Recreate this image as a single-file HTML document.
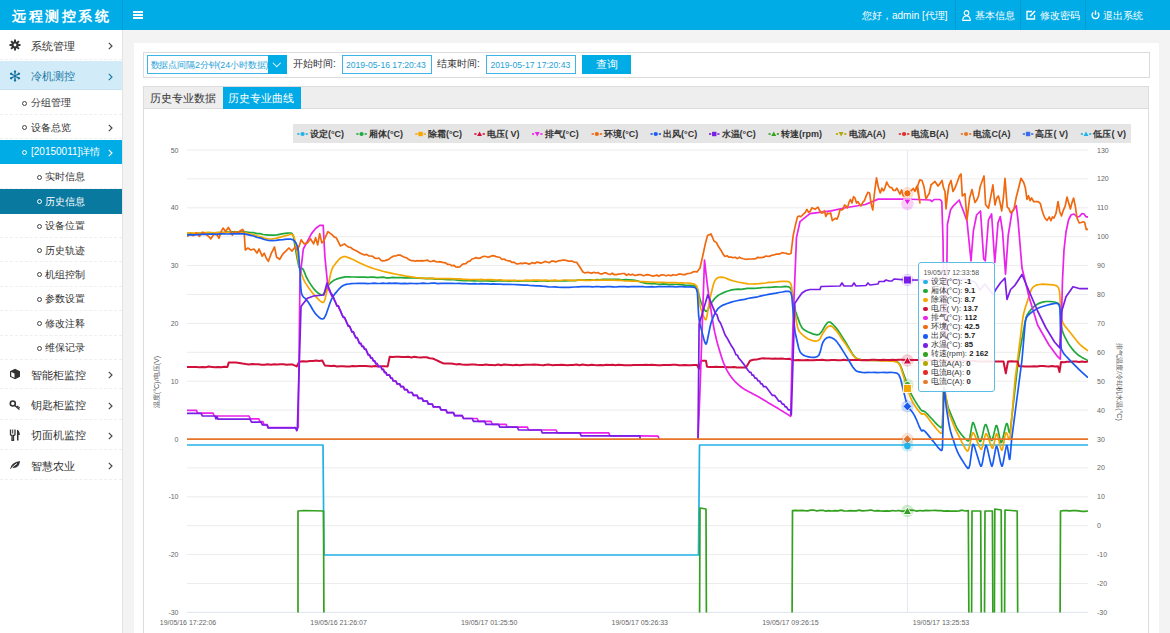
<!DOCTYPE html>
<html><head><meta charset="utf-8">
<style>
*{margin:0;padding:0;box-sizing:border-box}
html,body{width:1170px;height:633px;overflow:hidden;background:#f3f3f3;font-family:"Liberation Sans",sans-serif;color:#333}
.abs{position:absolute}
#hdr{position:absolute;left:0;top:0;width:1170px;height:30.4px;background:#00ace6;z-index:2}
#logo{position:absolute;left:0;top:0;width:123px;height:30px;border-right:1px solid #0799cf;color:#fff;font-weight:bold;font-size:13.5px;line-height:33.5px;padding-left:12px;letter-spacing:2.5px}
#burger{position:absolute;left:133px;top:11px;width:10px;height:8px;border-top:2px solid #fff;border-bottom:2px solid #fff}
#burger:after{content:"";position:absolute;left:0;top:1px;width:10px;height:2px;background:#fff}
.hr{position:absolute;top:0.5px;height:30px;line-height:30px;color:#fff;font-size:10px;white-space:nowrap}
.sep{position:absolute;top:0;width:1px;height:30px;background:#0799cf}
#side{position:absolute;left:0;top:30px;width:123px;height:603px;background:#fff;border-right:1px solid #e3e3e3}
.it{position:absolute;left:0;width:122px;border-bottom:1px dashed #efefef;color:#333;white-space:nowrap}
.it.t{height:30.3px;font-size:11px;line-height:30px}
.it.s{height:24.4px;font-size:10px;line-height:24px}
.it .tx{position:absolute;left:31px;top:0.5px}
.it.ss .tx{left:45px}
.it .chev{position:absolute;left:107.6px;top:12px;width:5px;height:8px}
.it.s .chev{top:9.2px}
.it .dot{position:absolute;left:22px;top:10px;width:5px;height:5px;border:1.4px solid #444;border-radius:50%}
.it.ss .dot{left:37px}
.ic{position:absolute;left:9px;top:9px;width:12px;height:12px}
#main{position:absolute;left:133.5px;top:43px;width:1025px;height:600px;background:#fff}
#form{position:absolute;left:143px;top:52px;width:1007px;height:25.5px;border:1px solid #dcdcdc;background:#fff}
.inp{position:absolute;top:55px;height:18.5px;border:1px solid #3cb4e6;color:#1e9fd8;font-size:8.6px;line-height:18px;padding-left:3.5px;background:#fff;white-space:nowrap}
.lbl{position:absolute;top:55px;height:18px;line-height:18px;font-size:10px;color:#333;white-space:nowrap}
#selbtn{position:absolute;left:268px;top:55px;width:19px;height:18.5px;background:#00ace6}
#selbtn:after{content:"";position:absolute;left:6px;top:5px;width:4.5px;height:4.5px;border-right:1.4px solid #fff;border-bottom:1.4px solid #fff;transform:rotate(45deg)}
#qbtn{position:absolute;left:582px;top:55px;width:49px;height:18.5px;background:#00ace6;color:#fff;font-size:10.5px;line-height:18.5px;text-align:center}
#tabs{position:absolute;left:143px;top:86px;width:1006px;height:560px;border:1px solid #dcdcdc;background:#fff}
#tabbar{position:absolute;left:0;top:0;width:1004px;height:22px;background:#eeeeee;border-bottom:1px solid #dcdcdc}
.tab{position:absolute;top:0;height:22px;line-height:22px;font-size:11px;white-space:nowrap}
#legend{position:absolute;left:292.7px;top:124.3px;width:838.7px;height:18.7px;background:#e5e5e5}
svg{position:absolute;left:0;top:0}
.tip{position:absolute;left:917.5px;top:261.5px;width:77.5px;height:130.5px;border:1px solid #5bbde6;border-radius:3px;background:rgba(255,255,255,0.9);padding:5px 0 0 5px;font-size:7.7px;color:#333}
.tip .tt{height:10px;line-height:10px;margin-bottom:-0.8px;color:#555;white-space:nowrap;font-size:6.9px}
.tip .tr{height:9.1px;line-height:9.1px;white-space:nowrap;position:relative;padding-left:7px}
.tip .tr i{position:absolute;left:-0.5px;top:2.8px;width:4.5px;height:4.5px;border-radius:50%}
.tip b{color:#222}
.ytl{position:absolute;font-size:7.5px;color:#555;white-space:nowrap}
</style></head><body>
<div id="hdr">
  <div id="logo">远程测控系统</div>
  <div id="burger"></div>
  <div class="hr" style="left:862px">您好，admin [代理]</div>
  <div class="sep" style="left:955px"></div>
  <svg class="abs" style="left:962px;top:10px" width="9" height="11" viewBox="0 0 9 11"><circle cx="4.5" cy="3" r="2.3" fill="none" stroke="#fff" stroke-width="1.2"/><path d="M0.8,10.3 Q0.8,6 4.5,6 Q8.2,6 8.2,10.3 Z" fill="none" stroke="#fff" stroke-width="1.2"/></svg>
  <div class="hr" style="left:974.5px">基本信息</div>
  <div class="sep" style="left:1019.5px"></div>
  <svg class="abs" style="left:1026px;top:10px" width="10" height="10" viewBox="0 0 10 10"><path d="M6,1.5 H1 V9 H8.5 V5" fill="none" stroke="#fff" stroke-width="1.3"/><path d="M4,6.2 L9,1" stroke="#fff" stroke-width="1.6"/></svg>
  <div class="hr" style="left:1039.5px">修改密码</div>
  <div class="sep" style="left:1084.5px"></div>
  <svg class="abs" style="left:1091px;top:10px" width="9" height="10" viewBox="0 0 9 10"><path d="M2.3,2.5 A3.4,3.4 0 1 0 6.7,2.5" fill="none" stroke="#fff" stroke-width="1.4"/><line x1="4.5" y1="0.5" x2="4.5" y2="5" stroke="#fff" stroke-width="1.4"/></svg>
  <div class="hr" style="left:1103px">退出系统</div>
</div>

<div id="side">
  <div class="it t" style="top:0">
    <svg class="ic" viewBox="0 0 12 12"><g fill="#333"><circle cx="6" cy="6" r="3.6"/><rect x="5" y="0.5" width="2" height="11"/><rect x="0.5" y="5" width="11" height="2"/><rect x="5" y="0.5" width="2" height="11" transform="rotate(45 6 6)"/><rect x="5" y="0.5" width="2" height="11" transform="rotate(-45 6 6)"/></g><circle cx="6" cy="6" r="1.4" fill="#fff"/></svg>
    <span class="tx">系统管理</span><svg class="chev" viewBox="0 0 5 8"><path d="M0.8,0.8 L4,4 L0.8,7.2" fill="none" stroke="#444" stroke-width="1.15"/></svg></div>
  <div class="it t" style="top:30.6px;height:29.9px;background:#d1ecf8;color:#1a78a6;border-bottom:1px solid #c5e3f0">
    <svg class="ic" style="left:9.3px;top:9.5px" viewBox="0 0 12 12"><g fill="#15729e"><circle cx="6" cy="6" r="1.6"/><g transform="rotate(0 6 6)"><rect x="5.3" y="1.2" width="1.4" height="3.2"/><path d="M6,0 L7.4,1.6 L6,3 L4.6,1.6 Z"/></g><g transform="rotate(60 6 6)"><rect x="5.3" y="1.2" width="1.4" height="3.2"/><path d="M6,0 L7.4,1.6 L6,3 L4.6,1.6 Z"/></g><g transform="rotate(120 6 6)"><rect x="5.3" y="1.2" width="1.4" height="3.2"/><path d="M6,0 L7.4,1.6 L6,3 L4.6,1.6 Z"/></g><g transform="rotate(180 6 6)"><rect x="5.3" y="1.2" width="1.4" height="3.2"/><path d="M6,0 L7.4,1.6 L6,3 L4.6,1.6 Z"/></g><g transform="rotate(240 6 6)"><rect x="5.3" y="1.2" width="1.4" height="3.2"/><path d="M6,0 L7.4,1.6 L6,3 L4.6,1.6 Z"/></g><g transform="rotate(300 6 6)"><rect x="5.3" y="1.2" width="1.4" height="3.2"/><path d="M6,0 L7.4,1.6 L6,3 L4.6,1.6 Z"/></g></g></svg>
    <span class="tx">冷机测控</span><svg class="chev" viewBox="0 0 5 8"><path d="M0.8,0.8 L4,4 L0.8,7.2" fill="none" stroke="#1a78a6" stroke-width="1.15"/></svg></div>
  <div class="it s" style="top:60.6px"><i class="dot"></i><span class="tx">分组管理</span></div>
  <div class="it s" style="top:85px"><i class="dot"></i><span class="tx">设备总览</span><svg class="chev" viewBox="0 0 5 8"><path d="M0.8,0.8 L4,4 L0.8,7.2" fill="none" stroke="#444" stroke-width="1.15"/></svg></div>
  <div class="it s" style="top:109.8px;height:24.6px;background:#00ace6;color:#fff;border-bottom-color:#00aae6"><i class="dot" style="border-color:#fff"></i><span class="tx">[20150011]详情</span><svg class="chev" viewBox="0 0 5 8"><path d="M0.8,0.8 L4,4 L0.8,7.2" fill="none" stroke="#fff" stroke-width="1.15"/></svg></div>
  <div class="it s ss" style="top:134.8px"><i class="dot"></i><span class="tx">实时信息</span></div>
  <div class="it s ss" style="top:159.2px;background:#0a799f;color:#fff;border-bottom-color:#0a799f"><i class="dot" style="border-color:#fff"></i><span class="tx">历史信息</span></div>
  <div class="it s ss" style="top:183.6px"><i class="dot"></i><span class="tx">设备位置</span></div>
  <div class="it s ss" style="top:208px"><i class="dot"></i><span class="tx">历史轨迹</span></div>
  <div class="it s ss" style="top:232.4px"><i class="dot"></i><span class="tx">机组控制</span></div>
  <div class="it s ss" style="top:256.8px"><i class="dot"></i><span class="tx">参数设置</span></div>
  <div class="it s ss" style="top:281.2px"><i class="dot"></i><span class="tx">修改注释</span></div>
  <div class="it s ss" style="top:305.6px"><i class="dot"></i><span class="tx">维保记录</span></div>
  <div class="it t" style="top:329px">
    <svg class="ic" viewBox="0 0 12 12"><path d="M6,0.8 L11,3.2 V8.8 L6,11.2 L1,8.8 V3.2 Z" fill="#333"/><path d="M2.2,4 L5.5,5.6 V9.8 L2.2,8.2 Z" fill="#fff"/></svg>
    <span class="tx">智能柜监控</span><svg class="chev" viewBox="0 0 5 8"><path d="M0.8,0.8 L4,4 L0.8,7.2" fill="none" stroke="#444" stroke-width="1.15"/></svg></div>
  <div class="it t" style="top:359.5px">
    <svg class="ic" viewBox="0 0 12 12"><circle cx="3.8" cy="4.5" r="2.5" fill="none" stroke="#333" stroke-width="1.6"/><path d="M5.5,6.2 L10.5,10.5 M8,8.3 L9.3,7 M9.3,9.5 L10.6,8.2" stroke="#333" stroke-width="1.5"/></svg>
    <span class="tx">钥匙柜监控</span><svg class="chev" viewBox="0 0 5 8"><path d="M0.8,0.8 L4,4 L0.8,7.2" fill="none" stroke="#444" stroke-width="1.15"/></svg></div>
  <div class="it t" style="top:389.8px">
    <svg class="ic" viewBox="0 0 12 12"><path d="M1.5,0.5 V5 Q1.5,6.5 3,6.5 V11.5 H4.5 V6.5 Q6,6.5 6,5 V0.5" fill="none" stroke="#333" stroke-width="1.3"/><path d="M3.7,0.5 V4.5" stroke="#333" stroke-width="1"/><path d="M8,11.5 V0.8 Q10.8,1.5 10.8,6 H9.5 V11.5 Z" fill="#333"/></svg>
    <span class="tx">切面机监控</span><svg class="chev" viewBox="0 0 5 8"><path d="M0.8,0.8 L4,4 L0.8,7.2" fill="none" stroke="#444" stroke-width="1.15"/></svg></div>
  <div class="it t" style="top:420.1px">
    <svg class="ic" viewBox="0 0 12 12"><path d="M1,10.5 Q2,3 11,2 Q10.5,9.5 3.5,9 Z" fill="#333"/><path d="M1,11 Q5,6 8,4.5" fill="none" stroke="#fff" stroke-width="1"/></svg>
    <span class="tx">智慧农业</span><svg class="chev" viewBox="0 0 5 8"><path d="M0.8,0.8 L4,4 L0.8,7.2" fill="none" stroke="#444" stroke-width="1.15"/></svg></div>
</div>

<div id="main"></div>
<div id="form"></div>
<div class="inp" style="left:146.5px;width:122px;font-size:8.9px;padding-left:3px;letter-spacing:-0.12px;overflow:hidden">数据点间隔2分钟(24小时数据)</div>
<div id="selbtn"></div>
<div class="lbl" style="left:293px">开始时间:</div>
<div class="inp" style="left:341.5px;width:90px">2019-05-16 17:20:43</div>
<div class="lbl" style="left:437px">结束时间:</div>
<div class="inp" style="left:486px;width:90px">2019-05-17 17:20:43</div>
<div id="qbtn">查询</div>

<div id="tabs">
  <div id="tabbar">
    <div class="tab" style="left:6px;color:#333">历史专业数据</div>
    <div class="tab" style="left:79px;width:78px;background:#00aae6;color:#fff;padding-left:5px">历史专业曲线</div>
  </div>
</div>
<div id="legend"></div>

<svg width="1170" height="633" style="font-family:'Liberation Sans',sans-serif">
<g font-size="7" fill="#666"><text x="178.5" y="152.5" text-anchor="end">50</text>
<text x="178.5" y="210.3" text-anchor="end">40</text>
<text x="178.5" y="268.1" text-anchor="end">30</text>
<text x="178.5" y="325.9" text-anchor="end">20</text>
<text x="178.5" y="383.7" text-anchor="end">10</text>
<text x="178.5" y="441.5" text-anchor="end">0</text>
<text x="178.5" y="499.3" text-anchor="end">-10</text>
<text x="178.5" y="557.1" text-anchor="end">-20</text>
<text x="178.5" y="614.9" text-anchor="end">-30</text>
<text x="1097" y="152.5" text-anchor="start">130</text>
<text x="1097" y="181.4" text-anchor="start">120</text>
<text x="1097" y="210.3" text-anchor="start">110</text>
<text x="1097" y="239.2" text-anchor="start">100</text>
<text x="1097" y="268.1" text-anchor="start">90</text>
<text x="1097" y="297.0" text-anchor="start">80</text>
<text x="1097" y="325.9" text-anchor="start">70</text>
<text x="1097" y="354.8" text-anchor="start">60</text>
<text x="1097" y="383.7" text-anchor="start">50</text>
<text x="1097" y="412.6" text-anchor="start">40</text>
<text x="1097" y="441.5" text-anchor="start">30</text>
<text x="1097" y="470.4" text-anchor="start">20</text>
<text x="1097" y="499.3" text-anchor="start">10</text>
<text x="1097" y="528.2" text-anchor="start">0</text>
<text x="1097" y="557.1" text-anchor="start">-10</text>
<text x="1097" y="586.0" text-anchor="start">-20</text>
<text x="1097" y="614.9" text-anchor="start">-30</text>
<text x="188.0" y="625" text-anchor="middle">19/05/16 17:22:06</text>
<text x="338.6" y="625" text-anchor="middle">19/05/16 21:26:07</text>
<text x="489.2" y="625" text-anchor="middle">19/05/17 01:25:50</text>
<text x="639.8" y="625" text-anchor="middle">19/05/17 05:26:33</text>
<text x="790.4" y="625" text-anchor="middle">19/05/17 09:26:15</text>
<text x="941.0" y="625" text-anchor="middle">19/05/17 13:25:53</text></g>
<line x1="187" y1="150.0" x2="1088" y2="150.0" stroke="#ececec" stroke-width="1"/>
<line x1="187" y1="178.9" x2="1088" y2="178.9" stroke="#ececec" stroke-width="1"/>
<line x1="187" y1="207.8" x2="1088" y2="207.8" stroke="#ececec" stroke-width="1"/>
<line x1="187" y1="236.7" x2="1088" y2="236.7" stroke="#ececec" stroke-width="1"/>
<line x1="187" y1="265.6" x2="1088" y2="265.6" stroke="#ececec" stroke-width="1"/>
<line x1="187" y1="294.5" x2="1088" y2="294.5" stroke="#ececec" stroke-width="1"/>
<line x1="187" y1="323.4" x2="1088" y2="323.4" stroke="#ececec" stroke-width="1"/>
<line x1="187" y1="352.3" x2="1088" y2="352.3" stroke="#ececec" stroke-width="1"/>
<line x1="187" y1="381.2" x2="1088" y2="381.2" stroke="#ececec" stroke-width="1"/>
<line x1="187" y1="410.1" x2="1088" y2="410.1" stroke="#ececec" stroke-width="1"/>
<line x1="187" y1="439.0" x2="1088" y2="439.0" stroke="#ececec" stroke-width="1"/>
<line x1="187" y1="467.9" x2="1088" y2="467.9" stroke="#ececec" stroke-width="1"/>
<line x1="187" y1="496.8" x2="1088" y2="496.8" stroke="#ececec" stroke-width="1"/>
<line x1="187" y1="525.7" x2="1088" y2="525.7" stroke="#ececec" stroke-width="1"/>
<line x1="187" y1="554.6" x2="1088" y2="554.6" stroke="#ececec" stroke-width="1"/>
<line x1="187" y1="583.5" x2="1088" y2="583.5" stroke="#ececec" stroke-width="1"/>
<line x1="187" y1="612.4" x2="1088" y2="612.4" stroke="#dfe4ee" stroke-width="1"/>
<line x1="907.4" y1="150" x2="907.4" y2="612" stroke="#e3e8f2" stroke-width="1"/>
<defs><clipPath id="cp"><rect x="187" y="140" width="901" height="472.6"/></clipPath></defs><g clip-path="url(#cp)">
<polyline fill="none" stroke="#20b2e6" stroke-width="1.7" stroke-linejoin="round" points="187.0,445.0 323.0,445.0 324.0,555.0 698.5,555.0 699.5,445.0 1088.0,445.0"/>
<polyline fill="none" stroke="#1fa83c" stroke-width="1.7" stroke-linejoin="round" points="187.0,233.6 190.1,233.5 193.1,233.5 196.2,233.4 199.2,233.0 202.3,232.8 205.4,232.9 208.4,232.7 211.5,232.9 214.5,232.8 217.6,232.6 220.6,232.5 223.7,232.4 226.8,232.0 229.8,232.1 232.9,231.8 235.9,232.2 239.0,231.8 243.5,231.8 246.5,232.0 250.9,232.5 254.0,232.7 257.0,233.6 260.0,233.6 263.0,234.5 266.1,234.8 270.5,235.2 273.5,235.2 277.2,234.8 281.8,233.9 285.2,233.4 287.4,233.1 289.2,233.0 290.8,233.0 292.0,233.6 292.9,234.9 293.6,236.7 293.9,239.2 294.3,241.8 294.8,244.5 295.5,248.8 296.6,255.4 297.4,259.6 297.9,262.1 298.4,264.4 298.9,266.5 299.5,267.9 300.2,268.7 300.9,268.8 301.6,268.3 302.4,268.5 303.3,269.6 304.1,271.4 305.1,273.9 306.1,276.5 307.4,279.0 309.0,281.9 311.0,284.9 312.8,287.5 314.3,289.4 315.9,291.1 317.4,292.5 318.8,293.6 320.1,294.3 321.2,294.8 322.3,294.9 323.3,294.3 324.3,293.1 325.4,291.2 326.4,288.8 327.6,286.6 328.9,284.6 330.2,283.1 331.8,281.8 333.5,280.6 335.6,279.5 337.9,278.6 340.5,277.9 343.0,277.3 345.3,276.9 347.4,276.8 349.5,276.9 351.7,277.0 354.2,277.0 358.5,277.1 361.6,277.0 364.7,277.1 367.8,277.4 370.9,277.0 373.9,277.1 377.0,277.6 380.1,277.4 383.2,277.2 386.3,277.8 389.4,277.8 392.5,277.4 395.6,277.6 398.6,277.5 401.7,277.7 404.8,277.9 407.9,277.7 411.0,277.9 415.5,278.0 418.5,278.1 423.0,278.3 426.1,278.6 429.3,278.4 432.4,278.6 435.5,279.1 438.7,279.0 441.8,279.2 444.9,279.5 448.1,279.6 451.2,279.7 454.3,279.6 457.5,280.2 460.6,280.5 463.7,280.7 466.9,280.6 470.0,280.7 474.5,280.9 477.5,281.0 482.0,281.0 485.0,280.9 488.0,280.9 491.0,281.1 494.0,281.1 497.0,280.8 500.0,280.8 503.0,280.9 506.0,281.0 509.0,281.2 512.0,281.0 515.0,280.7 518.0,281.2 521.0,281.0 524.0,281.0 527.0,280.8 530.0,281.0 533.0,280.9 536.0,281.2 539.0,280.8 542.0,281.0 545.0,280.8 548.0,281.1 551.0,280.7 554.0,281.0 558.5,281.0 561.5,280.9 566.0,280.8 569.1,280.6 572.2,280.5 575.2,280.6 578.3,280.1 581.4,280.2 584.5,280.0 587.5,279.9 590.6,279.9 593.7,280.1 596.8,279.7 599.8,279.9 602.9,279.3 606.0,279.4 610.5,279.3 613.5,279.3 618.0,279.4 621.7,279.8 625.3,279.6 629.0,279.8 633.4,280.1 636.1,280.6 638.7,281.3 641.1,282.1 643.7,282.8 646.4,283.3 650.8,283.6 653.9,283.6 657.0,284.0 660.1,284.3 663.2,283.8 666.3,284.1 669.4,284.6 672.4,284.4 675.5,284.5 678.6,284.5 681.7,284.6 684.8,285.1 687.9,285.4 691.0,285.3 694.9,286.1 696.7,287.7 698.1,290.6 698.9,294.9 699.8,298.5 700.7,301.3 702.1,304.8 703.9,309.0 705.4,311.1 706.6,311.1 707.9,309.8 709.1,307.1 710.5,304.5 712.0,302.1 713.6,299.9 715.4,297.8 717.4,296.0 719.7,294.4 722.9,292.9 727.1,291.3 730.6,290.2 733.5,289.6 738.0,289.1 741.1,289.3 744.3,288.8 747.4,288.3 750.5,288.3 753.7,288.4 756.8,288.2 759.9,287.9 763.1,287.5 766.2,287.5 769.3,287.3 772.5,287.2 775.6,286.8 778.7,287.0 781.9,286.8 785.0,286.4 788.9,286.9 790.6,288.3 792.0,291.9 794.0,304.1 794.9,308.5 795.6,311.4 797.0,315.6 800.0,323.9 801.9,327.7 803.8,329.6 807.6,331.8 813.4,334.1 817.3,334.9 819.4,334.2 822.0,331.2 825.0,326.0 827.2,322.9 828.6,322.0 829.9,322.0 831.1,322.8 832.5,324.0 834.0,325.5 835.6,327.4 837.4,329.6 839.1,332.0 840.7,334.4 843.1,338.1 846.4,343.4 849.6,349.0 852.9,354.6 855.6,357.8 857.9,359.1 862.0,359.9 865.1,360.2 868.2,359.9 871.3,360.4 874.4,360.3 877.5,360.5 880.6,360.6 883.7,360.4 886.8,360.5 889.9,360.6 893.0,360.8 897.0,361.6 899.0,363.1 901.0,366.7 905.3,378.9 906.8,383.2 907.9,386.0 909.0,388.8 910.3,391.8 911.5,394.6 912.9,397.2 915.2,401.1 918.3,406.1 920.5,409.3 921.6,410.5 922.6,411.1 923.3,410.9 924.4,411.4 925.8,412.5 928.5,415.2 931.8,418.8 935.0,422.3 938.3,425.6 940.9,427.6 941.9,427.2 942.5,424.0 943.4,392.0 943.6,389.0 943.9,389.0 944.7,391.9 946.8,401.5 947.8,405.9 948.7,408.7 950.3,412.9 955.3,424.5 957.2,428.5 958.8,431.0 961.4,434.5 965.2,438.9 967.7,440.9 968.9,440.6 969.9,437.5 971.9,425.6 972.7,422.6 973.3,422.6 974.5,425.4 978.6,438.7 979.8,441.5 980.6,441.5 981.7,438.6 984.2,427.4 985.3,424.5 986.0,424.5 987.2,427.4 990.1,437.6 991.3,440.5 992.0,440.5 993.0,437.6 995.2,428.4 996.1,425.5 996.8,425.5 997.7,428.5 1000.0,439.4 1000.9,442.4 1001.6,442.4 1002.6,439.5 1005.5,426.5 1006.5,423.6 1007.1,423.6 1007.9,425.9 1008.7,430.6 1009.4,432.8 1009.8,432.8 1010.4,429.8 1014.0,397.7 1017.6,366.0 1018.2,361.5 1018.6,358.5 1019.3,354.1 1025.2,321.1 1026.3,316.8 1027.6,314.2 1029.4,311.6 1031.7,308.8 1034.0,306.6 1036.2,305.0 1038.5,303.6 1041.0,302.6 1043.6,301.9 1046.3,301.5 1050.0,301.5 1054.5,302.0 1057.6,303.0 1059.2,304.7 1060.2,308.5 1061.4,324.8 1062.0,329.2 1062.8,332.1 1064.2,335.7 1066.5,340.1 1068.4,343.6 1070.0,346.0 1072.0,348.6 1074.3,351.4 1076.6,353.6 1078.9,355.5 1082.0,357.4 1088.0,360.6"/>
<polyline fill="none" stroke="#f5a700" stroke-width="1.7" stroke-linejoin="round" points="187.0,233.0 190.1,232.8 193.1,233.1 196.2,233.0 199.2,233.1 202.3,232.7 205.4,232.7 208.4,232.6 211.5,232.6 214.5,232.9 217.6,232.5 220.6,232.7 223.7,232.5 226.8,232.5 229.8,232.6 232.9,232.8 235.9,232.6 239.0,232.6 243.5,232.7 246.4,233.1 250.8,234.2 254.1,234.9 257.5,236.0 260.9,236.9 264.2,238.1 268.6,239.0 271.5,239.0 275.7,238.4 281.3,236.9 285.2,235.9 287.3,235.3 289.1,234.8 290.5,234.3 291.7,234.3 292.7,234.9 293.5,235.9 294.1,237.5 294.7,239.4 295.2,241.6 295.9,245.7 298.1,259.6 298.9,264.0 299.5,266.9 300.5,270.5 301.8,274.8 303.1,278.3 304.3,280.9 306.2,284.1 308.6,287.7 310.8,290.7 312.6,293.0 315.6,296.3 319.7,300.6 322.4,302.5 323.8,302.2 325.1,299.0 326.7,291.9 327.7,287.5 328.3,284.5 329.3,280.1 330.7,273.4 332.0,269.1 333.3,266.5 335.6,263.4 338.7,259.7 341.3,257.5 343.3,256.7 345.4,256.6 347.4,257.3 349.6,258.1 351.8,259.0 354.1,260.1 356.4,261.2 358.8,262.4 361.0,263.5 363.3,264.5 365.4,265.5 367.8,266.5 370.3,267.4 374.2,268.7 379.5,270.3 383.6,271.5 386.5,272.2 390.9,273.1 394.3,273.9 397.8,274.5 401.2,275.1 404.6,275.8 408.1,276.3 411.5,276.8 415.9,277.5 418.9,277.8 423.4,278.1 426.5,278.4 429.5,278.4 432.6,278.2 435.6,278.6 438.7,278.5 441.7,278.7 444.8,278.7 447.9,278.7 450.9,278.7 454.0,278.8 457.0,278.8 460.1,278.8 463.1,279.3 466.2,279.4 469.3,279.6 472.3,279.5 475.4,279.5 478.4,279.7 481.5,279.4 484.5,279.8 487.6,279.7 490.7,279.7 493.7,279.8 496.8,280.0 499.8,279.9 502.9,280.2 505.9,280.3 509.0,280.3 513.5,280.4 516.5,280.5 521.0,280.5 524.0,280.4 527.1,280.2 530.1,280.4 533.1,280.2 536.2,280.2 539.2,280.2 542.2,280.3 545.3,280.1 548.3,280.4 551.4,280.6 554.4,280.2 557.4,280.4 560.5,280.5 563.5,280.0 566.5,280.0 569.6,280.4 572.6,280.4 575.6,280.3 578.7,280.0 581.7,280.1 584.8,280.4 587.8,280.4 590.8,280.3 593.9,279.9 596.9,280.3 599.9,280.0 603.0,280.2 606.0,280.0 610.5,280.1 613.5,280.1 618.0,280.3 621.5,280.3 624.9,281.0 628.4,281.0 631.9,281.2 635.3,281.1 638.8,281.5 643.3,281.7 646.3,281.8 650.8,282.0 653.9,282.2 657.0,282.3 660.1,282.4 663.2,282.3 666.3,282.7 669.4,282.6 672.4,282.6 675.5,282.7 678.6,283.1 681.7,282.8 684.8,283.0 687.9,283.0 691.0,283.4 694.8,284.3 696.5,285.8 697.8,289.6 699.2,300.9 700.0,305.4 700.7,308.3 702.0,312.2 704.0,317.2 705.3,319.7 706.1,319.6 706.9,316.6 708.6,305.9 709.3,301.5 709.9,298.6 711.0,294.2 713.3,284.8 714.7,281.0 715.9,279.2 717.4,278.0 719.1,277.3 721.1,277.1 723.2,277.3 725.6,278.0 728.1,279.1 730.8,280.1 733.6,281.0 737.9,282.0 743.7,283.1 748.1,283.8 751.1,284.0 755.6,283.8 758.9,283.6 762.1,283.3 765.4,283.0 768.7,282.4 771.9,282.4 775.2,282.0 778.5,281.6 781.7,281.3 785.0,281.3 788.8,281.7 790.5,283.1 791.6,286.8 792.4,294.0 792.9,298.5 793.3,301.5 794.0,305.9 797.0,325.1 798.2,329.3 799.6,331.7 801.8,334.2 804.9,336.8 807.6,338.7 810.1,339.8 812.6,340.6 815.1,341.1 817.3,340.8 819.0,340.0 820.4,338.4 821.2,336.3 822.4,334.1 823.7,331.9 825.2,329.7 826.9,327.6 828.6,326.3 830.3,325.9 831.9,326.4 833.6,327.9 835.2,329.6 836.9,331.5 839.4,335.0 842.7,340.2 846.0,344.6 849.3,349.7 852.6,354.7 855.5,357.9 857.8,359.2 862.0,360.0 865.1,359.9 868.2,360.3 871.3,360.1 874.4,360.5 877.5,360.5 880.6,360.9 883.7,360.6 886.8,360.9 889.9,361.1 893.0,361.2 897.0,362.1 898.9,363.6 900.8,367.2 905.5,382.7 906.9,387.0 907.8,389.8 909.0,393.1 910.3,397.0 911.7,400.2 913.1,402.8 915.2,406.2 918.3,410.5 920.4,413.0 921.6,414.0 922.6,414.2 923.3,413.8 924.3,414.0 925.6,414.9 927.4,417.1 929.9,420.4 932.0,423.3 933.9,425.6 936.2,428.5 939.1,431.8 941.0,433.3 942.0,433.0 942.5,429.8 943.3,392.5 943.5,389.0 943.7,387.9 944.0,387.8 944.4,388.7 944.8,390.1 945.2,392.0 945.8,395.9 947.2,405.3 948.0,409.7 948.7,412.5 950.3,416.8 953.4,424.4 955.2,428.6 956.4,431.3 958.5,435.3 961.9,442.2 965.2,448.5 967.1,451.1 968.1,450.9 969.2,447.9 971.6,435.9 972.6,432.9 973.5,432.8 975.0,435.6 979.1,446.4 980.7,449.2 981.5,449.1 982.6,446.1 984.7,436.9 985.7,433.9 986.6,433.9 987.9,436.7 990.8,445.3 992.1,448.1 992.9,448.1 993.8,445.1 995.4,436.9 996.3,433.9 996.9,433.9 998.0,436.8 1000.5,447.2 1001.6,450.1 1002.2,450.1 1003.0,447.1 1005.0,435.9 1005.8,432.9 1006.5,432.9 1007.4,434.6 1008.3,437.9 1009.1,439.6 1009.7,439.5 1010.2,436.5 1014.5,386.0 1014.9,381.5 1015.2,378.5 1015.8,374.0 1019.2,346.9 1022.6,319.7 1023.3,315.2 1024.0,312.3 1025.2,308.0 1030.2,292.4 1031.8,288.7 1033.4,286.9 1035.2,285.6 1037.3,284.9 1039.7,284.5 1042.2,284.2 1046.5,284.4 1049.8,284.6 1053.0,284.8 1056.8,285.9 1058.4,287.5 1059.5,291.3 1061.3,316.3 1062.1,320.6 1063.1,323.1 1064.5,325.5 1066.2,327.6 1068.0,329.8 1069.8,332.0 1072.6,335.5 1076.3,340.3 1079.1,343.6 1081.0,345.5 1083.5,347.5 1088.0,350.7"/>
<polyline fill="none" stroke="#d0103a" stroke-width="2.0" stroke-linejoin="round" points="187.0,366.9 190.1,367.0 193.2,367.1 196.3,367.1 199.4,367.2 202.5,367.1 205.6,367.2 208.8,366.6 211.9,366.9 215.0,367.3 218.1,367.1 221.2,367.3 224.3,366.7 227.4,367.0 228.7,362.6 232.3,362.6 236.0,362.6 239.2,362.9 242.5,363.5 245.8,364.0 249.0,364.4 252.1,364.1 255.3,364.2 258.4,364.3 261.5,364.7 264.6,364.7 267.8,364.2 270.9,364.7 274.0,364.3 277.2,364.6 280.3,364.3 283.4,364.2 286.5,364.8 289.7,364.4 292.8,364.6 296.7,366.4 299.2,361.8 302.8,361.3 306.4,361.6 310.0,361.0 313.1,361.1 316.1,360.6 319.2,360.9 322.3,360.5 324.9,365.6 327.9,365.7 330.9,366.0 334.0,365.8 337.0,366.4 340.0,366.2 343.2,366.3 346.4,366.6 349.5,366.5 352.7,366.1 355.9,366.2 359.1,366.0 362.3,366.0 365.4,366.0 368.6,366.2 371.8,366.4 375.0,366.0 378.2,366.5 381.3,366.3 384.5,366.3 387.7,366.4 389.7,356.7 392.8,357.0 395.9,356.8 398.9,356.7 402.0,356.9 405.1,357.1 408.2,356.7 411.3,357.4 414.4,356.7 417.4,357.3 420.5,357.4 423.6,357.2 426.6,357.3 429.6,358.3 432.6,358.5 436.4,360.1 440.2,362.0 444.0,363.6 447.0,363.4 450.0,363.5 453.0,363.7 456.0,364.4 459.0,363.9 462.0,364.4 465.0,364.7 468.0,364.8 471.0,364.5 474.0,364.6 477.0,364.8 480.0,364.9 483.0,365.1 486.0,364.6 489.0,365.1 492.1,365.1 495.1,365.2 498.1,364.6 501.1,365.2 504.1,364.6 507.1,364.8 510.1,365.0 513.2,365.2 516.2,364.8 519.2,365.2 522.2,365.0 525.2,364.8 528.2,364.8 531.2,364.7 534.2,364.6 537.3,364.7 540.3,365.1 543.3,365.3 546.3,364.7 549.3,364.6 552.3,365.3 555.3,365.0 558.4,364.9 561.4,364.8 564.4,365.0 567.4,365.2 570.4,364.9 573.4,364.9 576.4,364.6 579.5,365.2 582.5,364.6 585.5,364.9 588.5,365.2 591.5,364.7 594.5,365.1 597.5,365.3 600.6,365.0 603.6,365.2 606.6,364.7 609.6,364.9 612.6,364.7 615.6,365.2 618.6,364.8 621.7,364.9 624.7,365.3 627.7,365.2 630.7,365.3 633.7,364.9 636.7,365.0 639.7,365.1 642.8,365.0 645.8,364.8 648.8,364.9 651.8,364.7 654.8,364.9 657.8,365.3 660.8,365.3 663.8,365.1 666.9,365.0 669.9,364.9 672.9,364.7 675.9,364.8 678.9,365.2 681.9,365.3 684.9,364.9 688.0,365.2 691.0,365.2 694.0,365.1 697.0,365.0 699.0,368.8 701.0,360.8 706.0,360.8 707.0,366.7 710.0,366.9 713.0,367.0 716.0,366.8 719.0,367.1 722.0,366.9 725.0,367.1 728.0,367.3 731.0,367.3 734.0,367.1 737.0,367.6 740.0,367.5 743.0,367.5 746.0,367.5 750.0,360.8 753.2,359.8 756.5,359.6 759.8,358.8 763.0,358.3 766.0,358.5 769.0,358.4 772.0,358.7 775.0,358.6 778.0,358.8 781.0,358.5 784.0,358.8 787.0,358.9 790.0,358.8 792.0,360.0 795.1,360.2 798.1,359.9 801.2,360.2 804.2,360.3 807.3,360.1 810.3,360.3 813.4,360.3 816.4,360.0 819.5,360.0 822.5,359.8 825.6,360.2 828.6,360.3 831.7,360.0 834.8,360.1 837.8,360.2 840.9,360.2 843.9,359.8 847.0,360.2 850.0,360.1 853.1,360.1 856.1,359.9 859.2,360.1 862.2,360.2 865.3,360.1 868.4,360.2 871.4,359.7 874.5,359.8 877.5,360.0 880.6,360.1 883.6,359.8 886.7,360.1 889.7,360.1 892.8,359.7 895.8,360.0 898.9,359.8 901.9,359.7 905.0,360.0 908.0,359.8 911.0,360.0 914.0,359.9 917.0,360.0 920.0,359.9 923.0,360.3 926.0,360.3 929.0,360.5 932.0,360.5 935.0,360.3 938.0,360.8 941.0,360.3 944.0,360.6 947.0,360.5 950.0,360.7 953.0,360.5 956.0,361.1 959.0,360.8 962.0,360.6 965.0,361.1 968.0,360.8 971.0,361.1 974.0,361.0 977.0,361.3 980.0,361.6 983.0,361.5 986.0,361.3 989.0,361.6 992.0,361.5 995.0,361.5 999.2,361.4 1003.5,361.5 1005.8,373.4 1008.0,361.5 1011.2,361.2 1014.3,361.6 1017.5,361.5 1019.0,366.3 1022.0,366.3 1025.0,366.6 1028.0,366.6 1031.0,366.4 1034.0,366.2 1037.0,366.6 1040.0,366.0 1043.0,366.0 1046.0,366.3 1049.0,366.4 1052.0,366.0 1055.0,366.4 1058.0,366.3 1059.5,372.0 1061.0,362.0 1064.0,362.2 1067.0,361.8 1070.0,361.8 1073.0,361.6 1076.0,361.6 1079.0,362.0 1082.0,361.5 1085.0,361.9 1088.0,361.5"/>
<polyline fill="none" stroke="#ea22ea" stroke-width="1.7" stroke-linejoin="round" points="187.0,410.4 196.5,410.4 197.5,413.2 213.0,413.2 214.2,416.0 249.0,416.0 250.3,418.9 258.8,418.9 260.0,421.7 263.0,421.7 264.0,424.6 267.2,424.6 268.3,427.6 295.6,427.6 296.8,430.5 298.2,427.0 300.0,277.8 303.3,249.0 311.5,233.6 315.6,228.5 319.7,225.4 323.2,225.4 324.9,257.0 328.0,288.0 332.0,296.0 332.0,294.4 333.3,297.2 334.5,300.1 335.8,303.0 337.0,305.9 338.3,305.9 339.5,308.8 340.8,311.7 342.0,314.6 343.3,317.4 344.5,317.4 345.8,320.3 347.0,323.2 348.3,326.1 349.5,326.1 350.8,329.0 352.0,331.9 353.3,331.9 354.5,334.8 355.8,337.7 357.0,337.7 358.3,340.5 359.5,343.4 360.8,343.4 362.0,346.3 363.3,346.3 364.6,349.2 365.8,349.2 367.1,352.1 368.3,355.0 369.6,355.0 370.8,357.9 372.1,357.9 373.3,360.8 374.6,360.8 375.8,363.6 377.1,363.6 378.3,366.5 379.6,366.5 380.8,366.5 382.1,369.4 383.3,369.4 384.6,372.3 385.8,372.3 387.1,375.2 388.3,375.2 389.6,375.2 390.8,378.1 392.1,378.1 393.3,381.0 394.6,381.0 395.9,381.0 397.1,383.8 398.4,383.8 399.6,383.8 400.9,386.7 402.1,386.7 403.4,386.7 404.6,389.6 405.9,389.6 407.1,389.6 408.4,392.5 409.6,392.5 410.9,392.5 412.1,392.5 413.4,395.4 414.6,395.4 415.9,395.4 417.1,395.4 418.4,398.3 419.6,398.3 420.9,398.3 422.1,398.3 423.4,401.2 424.7,401.2 425.9,401.2 427.2,401.2 428.4,404.1 429.7,404.1 430.9,404.1 432.2,404.1 433.4,406.9 434.7,406.9 435.9,406.9 437.2,406.9 438.4,406.9 439.7,406.9 440.9,409.8 442.2,409.8 443.4,409.8 444.7,409.8 445.9,409.8 447.2,412.7 448.4,412.7 449.7,412.7 450.9,412.7 452.2,412.7 453.4,412.7 454.7,415.6 456.0,415.6 457.2,415.6 458.5,415.6 459.7,415.6 461.0,415.6 462.2,415.6 463.5,418.5 464.7,418.5 466.0,418.5 467.2,418.5 468.5,418.5 469.7,418.5 471.0,418.5 472.2,418.5 473.5,418.5 474.7,418.5 476.0,418.5 477.2,418.5 478.5,421.4 479.7,421.4 481.0,421.4 482.2,421.4 483.5,421.4 484.7,421.4 486.0,421.4 487.3,421.4 488.5,421.4 489.8,421.4 491.0,421.4 492.3,424.3 493.5,424.3 494.8,424.3 496.0,424.3 497.3,424.3 498.5,424.3 499.8,424.3 501.0,424.3 502.3,424.3 503.5,424.3 504.8,424.3 506.0,424.3 507.3,427.2 508.5,427.2 509.8,427.2 511.0,427.2 512.3,427.2 513.5,427.2 514.8,427.2 516.0,427.2 517.3,427.2 518.6,427.2 519.8,427.2 521.1,427.2 522.3,427.2 523.6,427.2 524.8,427.2 526.1,427.2 527.3,427.2 528.6,430.0 529.8,430.0 531.1,430.0 532.3,430.0 533.6,430.0 534.8,430.0 536.1,430.0 537.3,430.0 538.6,430.0 539.8,430.0 541.1,430.0 542.3,430.0 543.6,430.0 544.8,430.0 546.1,430.0 547.3,430.0 548.6,430.0 549.9,430.0 551.1,430.0 552.4,430.0 553.6,430.0 554.9,430.0 556.1,430.0 557.4,432.9 558.6,432.9 559.9,432.9 561.1,432.9 562.4,432.9 563.6,432.9 564.9,432.9 566.1,432.9 567.4,432.9 568.6,432.9 569.9,432.9 571.1,432.9 572.4,432.9 573.6,432.9 574.9,432.9 576.1,432.9 577.4,432.9 578.7,432.9 579.9,432.9 581.2,432.9 582.4,432.9 583.7,432.9 584.9,432.9 586.2,432.9 587.4,432.9 588.7,432.9 589.9,432.9 591.2,432.9 592.4,432.9 593.7,432.9 594.9,432.9 596.2,432.9 597.4,432.9 598.7,432.9 599.9,432.9 601.2,432.9 602.4,432.9 603.7,432.9 604.9,432.9 606.2,432.9 607.4,432.9 608.7,432.9 610.0,435.8 611.2,435.8 612.5,435.8 613.7,435.8 615.0,435.8 616.2,435.8 617.5,435.8 618.7,435.8 620.0,435.8 621.2,435.8 622.5,435.8 623.7,435.8 625.0,435.8 626.2,435.8 627.5,435.8 628.7,435.8 630.0,435.8 631.2,435.8 632.5,435.8 633.7,435.8 635.0,435.8 636.2,435.8 637.5,435.8 638.7,435.8 640.0,435.8 658.0,436.2 659.0,438.5 659.0,439.0"/>
<polyline fill="none" stroke="#ea22ea" stroke-width="1.7" stroke-linejoin="round" points="698.0,440.0 700.0,390.0 704.5,260.0 705.9,272.7 706.7,279.2 707.2,283.7 707.7,287.7 708.2,291.2 708.8,295.5 709.6,300.7 710.6,307.7 712.0,316.5 713.1,323.4 714.0,328.6 714.9,332.9 715.7,336.3 716.6,340.2 717.8,344.6 719.2,349.4 720.8,354.8 722.3,359.5 723.8,363.5 725.3,366.9 726.6,369.7 728.1,372.3 729.6,374.8 731.3,377.1 733.0,379.2 734.8,381.3 736.7,383.2 738.6,384.9 740.5,386.5 742.5,388.0 744.6,389.4 746.7,390.6 748.9,391.7 751.0,392.8 753.1,393.9 755.1,394.9 757.0,396.0 758.9,397.1 760.8,398.2 762.6,399.2 764.3,400.3 766.1,401.3 767.8,402.4 769.5,403.4 771.3,404.5 773.0,405.5 774.7,406.6 776.5,407.6 778.2,408.6 779.8,409.6 781.3,410.5 782.7,411.3 784.0,412.1 785.2,412.9 786.4,413.6 787.9,414.6 790.6,416.4 793.0,324.3 796.5,237.4 800.0,221.7 809.9,213.6 831.2,210.9 844.0,208.0 865.4,204.5 878.2,199.1 905.0,199.0 930.0,200.0 932.0,201.5 934.0,199.5 940.0,199.5 941.8,201.5 943.0,240.0 944.5,350.0 946.0,330.0 947.4,224.5 950.5,210.0 952.9,206.3 959.2,200.0 961.0,205.0 963.0,210.0 967.0,221.0 971.0,260.8 973.4,230.8 976.6,215.0 980.5,211.0 983.7,259.0 985.3,260.8 988.5,219.8 991.6,214.0 994.8,262.4 998.0,222.9 1000.3,216.6 1002.6,232.0 1005.5,274.3 1008.2,235.5 1012.0,211.9 1016.3,205.7 1018.0,220.0 1022.0,268.0 1029.0,296.7 1037.6,325.0 1049.0,345.0 1057.5,356.4 1060.3,359.2 1061.2,330.0 1062.5,280.0 1064.0,250.0 1066.0,232.0 1068.5,220.0 1071.0,215.0 1074.0,214.0 1077.0,216.8 1079.5,216.5 1082.0,213.5 1084.0,214.0 1086.0,216.8 1088.0,216.8"/>
<polyline fill="none" stroke="#f0690f" stroke-width="1.7" stroke-linejoin="round" points="187.2,236.7 190.3,234.2 193.4,235.7 196.4,233.0 199.5,236.3 202.6,232.2 205.7,234.2 208.8,236.7 210.8,238.8 213.9,234.2 217.0,234.6 219.0,238.3 221.1,231.6 223.1,228.1 225.6,231.6 228.3,227.5 230.3,230.5 232.4,235.1 234.4,231.6 237.5,233.0 240.6,230.5 242.7,229.5 244.1,231.6 245.3,250.0 247.8,248.0 250.9,250.0 254.0,249.0 257.0,253.1 259.1,249.0 262.2,256.2 264.2,253.1 266.3,258.3 268.4,261.3 271.4,253.1 274.5,247.0 276.6,257.2 279.7,259.3 282.7,254.2 285.8,251.1 288.9,248.0 292.0,251.1 295.1,247.0 297.1,250.0 299.2,245.9 301.2,239.8 304.3,243.9 307.4,242.9 310.5,238.8 313.6,243.9 315.6,237.7 317.7,244.9 319.7,233.6 321.8,242.9 323.8,240.8 325.9,236.1 327.9,231.6 329.9,233.2 332.0,234.6 334.1,236.9 336.2,237.7 338.2,241.7 340.3,245.9 342.4,244.9 344.4,243.9 346.4,245.6 348.5,247.0 350.6,247.4 352.6,249.0 354.6,250.1 356.7,251.1 360.0,253.1 362.2,254.0 364.4,255.0 366.5,254.4 368.7,255.8 370.7,256.0 372.8,256.3 374.8,258.2 376.9,258.5 378.9,258.0 380.9,260.3 383.0,260.8 385.0,260.6 387.2,259.9 389.3,258.9 391.5,257.2 393.7,256.0 395.8,256.0 398.0,255.0 400.2,255.1 402.3,256.3 404.5,257.3 406.7,257.9 408.8,259.6 411.0,260.6 413.1,260.5 415.1,261.2 417.2,260.6 419.3,260.9 421.3,260.6 423.4,260.9 425.4,260.5 427.5,260.2 429.6,261.5 431.6,261.5 433.7,260.6 435.7,261.7 437.7,262.0 439.7,261.7 441.7,262.1 443.7,262.7 445.7,262.8 447.7,264.5 449.7,264.4 451.7,265.7 453.7,265.3 455.7,266.8 457.7,267.1 459.7,267.0 461.8,264.8 463.8,263.8 465.9,263.7 467.9,261.6 469.9,261.2 472.0,259.0 474.0,258.5 476.0,257.6 478.0,258.3 480.0,258.2 482.0,257.0 484.0,256.3 486.0,256.5 488.0,257.3 490.0,256.6 492.0,255.8 494.0,255.7 496.0,256.6 498.0,257.0 500.0,257.5 502.0,259.5 504.0,259.0 506.0,260.3 508.0,260.8 510.0,260.9 512.0,262.5 514.0,262.1 516.0,263.6 518.0,264.0 520.1,263.2 522.1,263.6 524.2,263.1 526.3,263.0 528.4,264.1 530.4,263.7 532.5,262.6 534.6,263.5 536.6,262.2 538.7,262.4 540.8,263.1 542.9,262.5 544.9,261.4 547.0,262.0 549.2,262.7 551.4,261.2 553.6,261.1 555.8,261.9 558.0,260.9 560.2,260.7 562.4,260.1 564.6,260.0 566.8,260.6 569.2,261.2 571.7,261.0 574.1,262.1 576.6,262.3 578.7,265.3 580.9,268.7 583.0,272.0 585.2,273.0 587.3,272.3 589.5,272.6 591.7,273.3 593.8,272.3 596.0,273.0 598.0,272.5 600.1,273.9 602.1,273.9 604.1,272.9 606.2,272.9 608.2,274.0 610.2,274.5 612.3,273.2 614.3,274.7 616.3,274.6 618.4,274.2 620.4,274.0 622.4,273.5 624.5,273.5 626.5,275.3 628.5,274.1 630.6,275.0 632.6,274.3 634.6,275.4 636.7,275.1 638.7,274.6 640.7,274.5 642.8,275.6 644.8,275.3 646.8,274.6 648.8,274.9 650.8,275.5 652.8,276.1 654.8,275.7 656.8,275.1 658.8,276.3 660.8,275.1 662.8,274.8 664.8,275.3 666.8,275.6 668.8,275.0 670.8,275.8 672.8,274.9 674.8,275.0 676.8,275.1 678.9,274.0 680.9,274.1 682.9,274.7 684.9,274.6 686.9,273.7 688.9,273.5 691.0,273.0 693.0,271.9 695.0,271.5 697.0,272.0 700.0,268.0 703.0,254.8 705.2,244.3 707.5,235.6 711.0,233.9 714.0,241.0 716.5,242.6 718.6,246.8 720.8,249.9 722.9,253.9 725.0,256.5 727.0,255.8 729.1,257.2 731.1,257.1 733.2,257.7 735.2,257.2 737.3,258.6 739.4,257.2 741.4,258.2 743.5,258.8 745.5,259.3 747.6,259.2 749.6,259.0 751.6,259.0 753.6,258.8 755.7,258.7 757.7,257.3 759.7,257.6 761.7,257.6 763.8,257.2 765.8,256.0 767.8,256.3 769.8,256.1 771.9,255.2 773.9,255.0 775.9,254.2 777.9,254.2 780.0,253.9 782.0,252.6 784.0,253.0 786.3,253.4 788.7,254.2 791.0,253.5 793.2,235.4 796.0,222.6 797.5,216.9 799.0,216.0 800.5,216.7 802.0,215.6 803.5,214.0 805.2,212.6 806.9,209.4 808.6,212.3 810.3,211.2 812.0,207.7 813.5,208.5 815.1,209.3 816.6,208.1 818.1,207.2 819.6,210.6 821.2,212.9 822.7,213.0 824.3,210.6 825.9,216.4 827.5,213.1 829.1,213.7 830.7,213.0 832.3,220.6 833.9,219.4 835.5,218.3 837.0,219.2 838.5,215.6 840.0,209.7 841.5,210.0 843.0,209.5 844.5,205.0 846.0,206.0 847.5,207.9 849.0,202.4 850.5,199.5 852.0,203.0 853.5,196.6 855.0,198.0 856.5,203.1 858.0,201.7 859.5,204.4 861.0,206.0 862.7,202.3 864.4,200.7 866.2,195.9 867.9,192.3 869.6,193.0 871.2,204.1 872.8,210.0 874.6,192.0 876.5,177.8 878.4,187.4 880.3,193.0 881.9,188.2 883.5,190.9 885.1,187.6 886.7,182.0 888.4,185.5 890.1,187.3 891.8,187.7 893.5,190.5 895.2,190.5 896.8,188.2 898.4,191.2 900.0,194.1 901.6,190.0 903.2,195.6 904.8,195.8 906.4,192.7 908.0,193.8 909.7,191.3 911.4,190.5 913.2,188.5 914.9,191.4 916.6,186.4 918.3,193.9 920.0,203.0 917.6,186.0 919.8,179.8 922.0,180.5 924.0,186.8 926.0,199.0 927.7,195.9 929.3,193.2 931.0,185.0 933.0,183.2 935.0,181.5 936.5,183.7 938.0,186.0 940.0,183.6 942.0,180.5 943.5,187.8 945.0,191.5 946.0,209.0 947.5,195.0 949.0,185.0 951.0,180.5 953.0,191.5 955.0,187.9 957.0,182.7 959.5,175.7 961.0,174.0 962.3,196.0 965.0,193.7 967.0,220.0 969.6,198.0 972.0,189.5 973.5,196.4 975.0,202.5 976.8,200.1 978.5,196.0 980.2,186.5 982.0,181.5 984.0,176.0 985.6,204.8 988.5,208.1 991.3,193.8 992.9,184.9 995.0,205.0 996.7,198.1 998.4,196.0 1000.0,202.4 1001.7,210.9 1003.4,197.7 1005.0,178.3 1007.2,207.0 1008.9,208.7 1010.6,212.6 1012.3,211.5 1014.0,209.0 1016.1,197.8 1018.3,189.3 1021.0,178.3 1023.8,182.7 1025.4,188.1 1027.0,199.3 1028.5,195.7 1030.1,200.7 1031.6,198.0 1033.8,201.7 1036.0,201.5 1038.2,201.7 1040.4,203.7 1041.9,209.8 1043.4,214.5 1044.9,218.0 1047.1,220.4 1049.3,217.0 1050.9,220.6 1052.4,217.0 1054.0,218.0 1056.0,213.3 1058.0,201.5 1059.8,212.0 1061.5,215.9 1063.3,210.3 1065.2,206.1 1067.0,197.0 1068.7,202.9 1070.4,209.0 1072.0,202.6 1073.6,198.0 1075.3,206.2 1077.0,218.0 1079.2,223.0 1081.4,222.5 1083.1,221.7 1084.7,222.6 1086.3,229.6 1088.0,229.0"/>
<polyline fill="none" stroke="#1a5cf2" stroke-width="1.7" stroke-linejoin="round" points="187.0,235.0 190.6,234.7 194.3,234.8 197.9,234.7 201.5,234.4 206.0,234.3 209.0,234.2 213.5,234.1 216.7,234.3 219.9,233.9 223.1,233.8 226.2,234.0 229.4,233.9 232.6,233.7 235.8,233.8 239.0,233.7 243.5,233.9 246.4,234.3 250.7,235.3 254.1,236.3 257.5,237.5 260.9,238.2 264.3,239.5 268.6,240.5 271.5,240.7 276.0,240.4 279.5,239.8 283.1,239.7 286.6,239.1 290.7,239.1 292.9,239.8 294.6,241.2 296.0,243.1 297.0,245.3 297.8,247.8 298.5,252.0 299.5,265.6 299.9,270.1 300.1,273.1 300.3,277.6 300.9,289.2 301.5,293.3 302.3,295.4 303.5,297.1 305.1,298.4 306.6,300.1 308.1,302.0 310.2,305.3 312.8,309.8 315.0,313.1 316.8,315.2 318.7,317.0 320.7,318.6 322.5,319.0 324.0,318.4 325.8,315.2 330.0,303.0 331.7,298.9 333.2,296.3 335.5,293.1 338.8,289.2 341.5,286.6 343.7,285.3 346.1,284.4 348.7,284.0 351.3,283.7 354.1,283.5 358.5,283.4 361.6,283.3 364.6,283.3 367.7,283.6 370.7,283.5 373.8,283.2 376.8,283.4 379.9,283.5 382.9,283.2 386.0,283.5 389.0,283.2 392.1,283.3 395.1,283.2 398.2,283.3 401.2,283.6 404.3,283.4 407.4,283.6 410.4,283.4 413.5,283.5 416.5,283.6 419.6,283.5 422.6,283.2 425.7,283.4 428.7,283.5 431.8,283.2 434.8,283.2 437.9,283.6 440.9,283.4 444.0,283.4 448.5,283.4 451.5,283.4 456.0,283.5 459.1,283.4 462.2,283.6 465.4,283.5 468.5,283.9 471.6,283.8 474.7,283.6 477.8,284.0 480.9,283.7 484.1,283.9 487.2,283.8 490.3,284.2 493.4,283.9 496.5,284.2 499.6,284.0 502.8,284.3 505.9,284.4 509.0,284.4 513.5,284.5 516.5,284.6 521.0,284.9 524.0,285.1 527.1,285.2 530.1,285.5 533.2,285.6 536.2,285.9 539.3,285.8 542.4,286.2 545.4,286.3 548.5,286.8 551.5,287.0 554.6,286.8 557.6,287.2 562.1,287.4 565.1,287.4 569.2,287.3 574.4,287.0 578.5,286.8 581.5,286.7 586.0,286.7 589.0,286.5 592.0,286.8 595.0,286.7 598.0,286.5 601.0,286.8 604.0,286.9 607.0,286.7 610.0,286.6 613.0,286.8 616.0,287.0 619.0,286.6 622.0,286.6 625.0,286.6 628.0,286.8 631.0,286.7 634.0,286.6 637.0,286.7 640.0,286.5 643.0,286.7 646.0,287.0 649.0,286.8 652.0,286.7 655.0,287.0 658.0,286.7 661.0,286.6 664.0,286.5 667.0,286.6 670.0,286.6 673.0,286.6 676.0,287.0 679.0,286.7 682.0,286.7 685.0,286.8 688.0,287.0 691.0,286.8 694.8,287.5 696.4,289.0 697.4,292.8 698.6,314.8 699.1,319.3 699.5,322.2 700.6,326.6 704.4,341.1 705.6,344.0 706.3,344.0 707.2,341.0 710.1,326.7 711.2,322.3 712.2,319.5 713.7,316.0 715.9,311.7 718.0,308.6 720.1,306.8 723.1,305.1 727.2,303.5 730.6,302.4 733.5,301.5 737.9,300.5 741.2,299.8 744.5,299.3 747.8,298.5 751.2,297.9 754.5,297.3 757.8,296.8 761.1,295.9 765.5,295.0 768.5,294.4 772.9,293.6 776.0,293.2 779.1,292.5 782.3,292.0 785.4,291.3 789.2,291.4 790.8,292.6 791.8,296.2 794.3,325.0 794.8,329.5 795.2,332.4 796.1,336.8 798.7,348.0 800.0,351.8 801.5,353.7 803.3,355.1 805.4,356.0 807.7,356.6 810.1,357.1 812.6,357.3 815.1,357.3 817.2,356.6 818.9,355.1 820.2,351.9 821.4,347.1 822.4,343.6 823.4,341.4 824.6,339.7 826.0,338.4 827.4,337.6 828.9,337.2 830.5,337.4 832.2,338.0 833.8,338.9 835.3,340.1 836.8,341.6 838.0,343.4 839.4,345.3 840.8,347.5 843.1,351.1 846.4,356.4 849.6,361.8 852.9,367.2 855.6,370.4 857.9,371.7 862.0,372.3 865.1,372.6 868.2,372.4 871.3,372.5 874.4,372.3 877.5,372.6 880.6,372.5 883.7,372.3 886.8,372.7 889.9,372.4 893.0,372.5 896.9,373.2 898.8,374.7 900.4,378.3 905.9,400.6 907.2,404.7 908.4,407.1 909.8,409.2 911.5,411.0 913.0,413.1 914.4,415.4 916.3,419.3 919.2,426.5 920.8,429.7 921.6,430.8 922.2,430.9 922.7,430.2 923.5,430.3 924.7,431.1 927.2,433.9 931.0,438.6 934.8,443.3 938.6,448.2 941.0,450.4 942.0,450.1 942.5,446.9 943.9,390.6 944.0,387.6 944.2,387.6 944.6,390.6 945.6,401.4 946.1,405.9 946.5,408.9 947.2,413.3 949.0,424.1 949.9,428.5 950.6,431.4 951.9,435.7 955.7,447.2 957.3,451.4 958.6,454.1 960.8,458.0 965.8,465.9 967.9,468.4 968.9,468.1 969.8,465.1 972.2,447.4 972.9,444.4 973.5,444.4 974.7,447.2 979.6,463.3 980.8,466.1 981.5,466.1 982.3,463.1 985.0,448.4 985.8,445.4 986.4,445.4 987.3,448.4 990.7,463.1 991.6,466.1 992.2,466.1 993.0,463.1 995.5,449.3 996.3,446.3 996.8,446.3 997.8,449.3 1000.7,463.1 1001.7,466.1 1002.3,466.1 1003.1,463.1 1005.8,448.4 1006.6,445.5 1007.1,445.5 1007.7,448.4 1008.9,456.5 1009.4,459.4 1009.8,459.4 1010.2,456.4 1011.1,445.6 1011.5,441.1 1011.8,438.1 1012.4,433.7 1016.8,399.6 1021.2,365.9 1021.8,361.5 1022.1,358.5 1022.5,354.0 1025.2,322.6 1026.1,318.4 1027.5,316.0 1029.9,313.6 1033.4,311.0 1036.5,309.1 1039.1,307.8 1042.6,306.5 1046.8,305.3 1050.1,304.4 1052.6,303.9 1054.8,303.5 1056.8,303.3 1058.3,303.9 1059.4,305.3 1060.0,309.0 1060.8,344.7 1061.4,349.0 1062.5,351.5 1064.0,353.9 1065.9,356.0 1067.9,358.1 1070.0,360.3 1072.7,363.1 1076.2,366.7 1078.9,369.4 1081.0,371.4 1083.5,373.7 1088.0,377.7"/>
<polyline fill="none" stroke="#7a1ee6" stroke-width="1.7" stroke-linejoin="round" points="187.0,413.3 201.0,413.3 202.5,416.0 215.0,416.0 216.0,419.0 217.0,416.5 218.0,419.2 250.0,419.2 251.5,422.2 261.0,422.2 262.5,425.0 267.0,425.0 268.0,427.8 295.6,427.8 296.8,430.5 297.4,427.8 301.0,306.5 307.4,298.3 313.6,296.0 323.8,295.0 327.0,283.0 332.0,296.0 332.0,294.4 333.3,297.2 334.5,300.1 335.8,303.0 337.0,305.9 338.3,305.9 339.5,308.8 340.8,311.7 342.0,314.6 343.3,317.4 344.5,317.4 345.8,320.3 347.0,323.2 348.3,326.1 349.5,326.1 350.8,329.0 352.0,331.9 353.3,331.9 354.5,334.8 355.8,337.7 357.0,337.7 358.3,340.5 359.5,343.4 360.8,343.4 362.0,346.3 363.3,346.3 364.6,349.2 365.8,349.2 367.1,352.1 368.3,355.0 369.6,355.0 370.8,357.9 372.1,357.9 373.3,360.8 374.6,360.8 375.8,363.6 377.1,363.6 378.3,366.5 379.6,366.5 380.8,366.5 382.1,369.4 383.3,369.4 384.6,372.3 385.8,372.3 387.1,375.2 388.3,375.2 389.6,375.2 390.8,378.1 392.1,378.1 393.3,381.0 394.6,381.0 395.9,381.0 397.1,383.8 398.4,383.8 399.6,383.8 400.9,386.7 402.1,386.7 403.4,386.7 404.6,389.6 405.9,389.6 407.1,389.6 408.4,392.5 409.6,392.5 410.9,392.5 412.1,392.5 413.4,395.4 414.6,395.4 415.9,395.4 417.1,395.4 418.4,398.3 419.6,398.3 420.9,398.3 422.1,398.3 423.4,401.2 424.7,401.2 425.9,401.2 427.2,401.2 428.4,404.1 429.7,404.1 430.9,404.1 432.2,404.1 433.4,406.9 434.7,406.9 435.9,406.9 437.2,406.9 438.4,406.9 439.7,406.9 440.9,409.8 442.2,409.8 443.4,409.8 444.7,409.8 445.9,409.8 447.2,412.7 448.4,412.7 449.7,412.7 450.9,412.7 452.2,412.7 453.4,412.7 454.7,415.6 456.0,415.6 457.2,415.6 458.5,415.6 459.7,415.6 461.0,415.6 462.2,415.6 463.5,418.5 464.7,418.5 466.0,418.5 467.2,418.5 468.5,418.5 469.7,418.5 471.0,418.5 472.2,418.5 473.5,421.4 474.7,421.4 476.0,421.4 477.2,421.4 478.5,421.4 479.7,421.4 481.0,421.4 482.2,421.4 483.5,421.4 484.7,421.4 486.0,424.3 487.3,424.3 488.5,424.3 489.8,424.3 491.0,424.3 492.3,424.3 493.5,424.3 494.8,424.3 496.0,424.3 497.3,424.3 498.5,424.3 499.8,427.2 501.0,427.2 502.3,427.2 503.5,427.2 504.8,427.2 506.0,427.2 507.3,427.2 508.5,427.2 509.8,427.2 511.0,427.2 512.3,427.2 513.5,427.2 514.8,427.2 516.0,427.2 517.3,427.2 518.6,430.0 519.8,430.0 521.1,430.0 522.3,430.0 523.6,430.0 524.8,430.0 526.1,430.0 527.3,430.0 528.6,430.0 529.8,430.0 531.1,430.0 532.3,430.0 533.6,430.0 534.8,430.0 536.1,430.0 537.3,430.0 538.6,430.0 539.8,430.0 541.1,430.0 542.3,432.9 543.6,432.9 544.8,432.9 546.1,432.9 547.3,432.9 548.6,432.9 549.9,432.9 551.1,432.9 552.4,432.9 553.6,432.9 554.9,432.9 556.1,432.9 557.4,432.9 558.6,432.9 559.9,432.9 561.1,432.9 562.4,432.9 563.6,432.9 564.9,432.9 566.1,432.9 567.4,432.9 568.6,432.9 569.9,432.9 571.1,432.9 572.4,432.9 573.6,432.9 574.9,432.9 576.1,432.9 577.4,432.9 578.7,432.9 579.9,432.9 581.2,435.8 582.4,435.8 583.7,435.8 584.9,435.8 586.2,435.8 587.4,435.8 588.7,435.8 589.9,435.8 591.2,435.8 592.4,435.8 593.7,435.8 594.9,435.8 596.2,435.8 597.4,435.8 598.7,435.8 599.9,435.8 601.2,435.8 602.4,435.8 603.7,435.8 604.9,435.8 606.2,435.8 607.4,435.8 608.7,435.8 610.0,435.8 611.2,435.8 612.5,435.8 613.7,435.8 615.0,435.8 616.2,435.8 617.5,435.8 618.7,435.8 620.0,435.8 621.2,435.8 622.5,435.8 623.7,435.8 625.0,435.8 626.2,435.8 627.5,435.8 628.7,435.8 630.0,435.8 631.2,435.8 632.5,435.8 633.7,435.8 635.0,435.8 636.2,435.8 637.5,435.8 638.7,435.8 640.0,435.8 640.0,439.0"/>
<polyline fill="none" stroke="#7a1ee6" stroke-width="1.7" stroke-linejoin="round" points="698.0,440.0 699.1,324.3 707.8,294.7 709.3,298.3 710.8,302.0 712.3,305.9 713.5,308.7 714.6,311.4 715.6,313.8 716.9,314.6 718.6,320.3 720.6,323.2 722.9,329.0 725.0,334.8 726.9,337.7 728.5,340.5 730.0,343.4 731.7,346.3 733.7,349.2 736.1,355.0 737.4,355.0 738.6,357.9 741.1,360.8 743.3,363.6 745.4,366.5 747.4,369.4 749.6,372.3 750.9,372.3 752.1,375.2 753.5,375.2 754.9,378.1 756.5,378.1 758.1,381.0 759.5,381.0 760.9,383.8 762.2,383.8 763.5,386.7 765.9,386.7 768.0,389.6 770.2,392.5 772.4,395.4 774.5,395.4 776.8,398.3 778.8,401.2 780.6,401.2 782.3,404.1 783.8,404.1 785.2,406.9 786.5,406.9 788.2,409.8 789.6,409.8 791.0,409.8 791.3,415.0 794.8,303.4 798.2,298.2 802.0,293.0 806.0,290.5 810.0,289.5 820.0,289.5 821.0,286.5 840.0,286.0 842.0,283.0 844.0,286.0 852.0,286.0 854.0,283.0 856.0,286.0 866.0,285.5 868.0,283.0 870.0,285.0 878.0,284.0 879.0,281.5 884.0,281.5 886.0,280.0 889.0,281.0 892.0,281.0 894.0,279.0 905.0,279.8 960.0,280.2 965.0,279.0 975.0,282.0 980.0,290.0 985.0,284.0 993.0,294.5 995.8,289.5 1000.7,282.5 1005.0,278.2 1007.0,299.5 1010.6,289.5 1014.9,285.3 1022.0,274.5 1029.0,291.0 1037.6,311.0 1046.0,328.0 1054.7,342.2 1059.8,347.9 1061.8,311.0 1066.0,296.7 1073.0,286.7 1080.0,288.7 1088.0,288.7"/>
<polyline fill="none" stroke="#33a11f" stroke-width="1.7" stroke-linejoin="round" points="298.0,640.0 298.0,511.0 304.0,510.5 323.5,511.0 324.0,640.0"/>
<polyline fill="none" stroke="#33a11f" stroke-width="1.7" stroke-linejoin="round" points="699.5,640.0 700.0,508.0 706.0,509.0 706.5,640.0"/>
<polyline fill="none" stroke="#33a11f" stroke-width="1.7" stroke-linejoin="round" points="792.0,640.0 792.5,510.6 792.5,510.6 795.5,510.3 798.6,510.7 801.6,510.4 804.6,510.7 807.7,510.8 810.7,510.1 813.7,510.0 816.7,511.0 819.8,510.3 822.8,510.3 825.8,511.2 828.9,510.6 831.9,511.0 834.9,510.6 838.0,510.8 841.0,510.2 844.0,510.8 847.1,511.0 850.1,510.6 853.1,510.9 856.2,510.8 859.2,510.1 862.2,510.9 865.2,510.7 868.3,510.4 871.3,510.0 874.3,511.0 877.4,510.6 880.4,510.9 883.4,511.1 886.5,510.9 889.5,511.1 892.5,510.5 895.6,511.0 898.6,510.5 901.6,511.1 904.6,511.1 907.7,510.1 910.7,510.2 913.7,510.3 916.8,511.2 919.8,510.5 922.8,510.8 925.9,510.4 928.9,510.6 931.9,510.5 935.0,510.4 938.0,510.7 941.0,510.7 944.1,511.1 947.1,510.8 950.1,511.1 953.1,511.0 956.2,511.2 959.2,510.8 962.2,510.2 965.3,511.0 968.3,510.6 969.0,640.0"/>
<polyline fill="none" stroke="#33a11f" stroke-width="1.7" stroke-linejoin="round" points="971.5,640.0 972.0,511.0 980.7,511.0 981.3,640.0"/>
<polyline fill="none" stroke="#33a11f" stroke-width="1.7" stroke-linejoin="round" points="984.4,640.0 985.0,511.0 992.4,511.0 993.0,640.0"/>
<polyline fill="none" stroke="#33a11f" stroke-width="1.7" stroke-linejoin="round" points="994.3,640.0 994.8,509.0 1001.2,510.0 1001.8,640.0"/>
<polyline fill="none" stroke="#33a11f" stroke-width="1.7" stroke-linejoin="round" points="1004.5,640.0 1005.0,510.0 1017.2,511.0 1017.8,640.0"/>
<polyline fill="none" stroke="#33a11f" stroke-width="1.7" stroke-linejoin="round" points="1060.0,640.0 1060.5,511.0 1060.5,511.0 1063.6,510.7 1066.6,510.6 1069.7,510.9 1072.7,510.7 1075.8,510.6 1078.8,510.9 1081.9,511.4 1084.9,511.3 1088.0,511.0"/>
<polyline fill="none" stroke="#e8742a" stroke-width="1.7" stroke-linejoin="round" points="187.0,439.2 1088.0,439.2"/>
</g>
<circle cx="907.4" cy="193.3" r="6.2" fill="#f0690f" fill-opacity="0.22"/>
<circle cx="907.4" cy="193.3" r="3.6" fill="#f0690f" stroke="#fff" stroke-width="0.9"/>
<circle cx="907.4" cy="204" r="6.2" fill="#ea22ea" fill-opacity="0.22"/>
<path d="M903.6,199 L911.1999999999999,199 L907.4,205.5 Z" fill="#ea22ea" stroke="#fff" stroke-width="0.9"/>
<circle cx="907.4" cy="280" r="6.2" fill="#7a1ee6" fill-opacity="0.22"/>
<rect x="903.4" y="276" width="8" height="8" fill="#7a1ee6" stroke="#fff" stroke-width="0.9"/>
<circle cx="907.4" cy="360.5" r="6.2" fill="#d0103a" fill-opacity="0.22"/>
<path d="M903.1999999999999,364 L911.6,364 L907.4,356.5 Z" fill="#d0103a" stroke="#fff" stroke-width="0.9"/>
<circle cx="907.4" cy="384.6" r="6.2" fill="#1fa83c" fill-opacity="0.18"/>
<circle cx="907.4" cy="384.6" r="3.2" fill="#1fa83c" stroke="#fff" stroke-width="0.9"/>
<circle cx="907.4" cy="388.4" r="6.2" fill="#f5a700" fill-opacity="0.15"/>
<rect x="903.4" y="384.4" width="8" height="8" fill="#f5a700" stroke="#fff" stroke-width="0.9"/>
<circle cx="907.4" cy="406.4" r="6.2" fill="#1a5cf2" fill-opacity="0.22"/>
<path d="M907.4,401.8 L911.8,406.4 L907.4,411 L903.0,406.4 Z" fill="#1a5cf2" stroke="#fff" stroke-width="0.9"/>
<circle cx="907.4" cy="439.2" r="6.2" fill="#e8742a" fill-opacity="0.22"/>
<path d="M907.4,434.8 L911.8,439.2 L907.4,443.6 L903.0,439.2 Z" fill="#e8742a" stroke="#fff" stroke-width="0.9"/>
<circle cx="907.4" cy="445.5" r="6.2" fill="#20b2e6" fill-opacity="0.22"/>
<circle cx="907.4" cy="446" r="3.2" fill="#20b2e6"/>
<circle cx="907.4" cy="511" r="6.2" fill="#33a11f" fill-opacity="0.22"/>
<path d="M903.1999999999999,514.5 L911.6,514.5 L907.4,507 Z" fill="#33a11f" stroke="#fff" stroke-width="0.9"/>
<g font-size="9" font-weight="bold" fill="#333"><rect x="297.3" y="133.2" width="2.2" height="1.6" fill="#20b2e6"/><rect x="305.6" y="133.2" width="2.2" height="1.6" fill="#20b2e6"/>
<circle cx="302.55" cy="134" r="2.1" fill="#20b2e6"/>
<text x="309.90000000000003" y="137.3">设定(°C)</text>
<rect x="356.3" y="133.2" width="2.2" height="1.6" fill="#1fa83c"/><rect x="364.6" y="133.2" width="2.2" height="1.6" fill="#1fa83c"/>
<circle cx="361.55" cy="134" r="2.1" fill="#1fa83c"/>
<text x="368.90000000000003" y="137.3">厢体(°C)</text>
<rect x="415.3" y="133.2" width="2.2" height="1.6" fill="#f5a700"/><rect x="423.6" y="133.2" width="2.2" height="1.6" fill="#f5a700"/>
<rect x="418.35" y="131.8" width="4.4" height="4.4" fill="#f5a700"/>
<text x="427.90000000000003" y="137.3">除霜(°C)</text>
<rect x="474.3" y="133.2" width="2.2" height="1.6" fill="#d0103a"/><rect x="482.6" y="133.2" width="2.2" height="1.6" fill="#d0103a"/>
<path d="M477.05,136 L482.05,136 L479.55,131.5 Z" fill="#d0103a"/>
<text x="486.90000000000003" y="137.3">电压( V)</text>
<rect x="532.0" y="133.2" width="2.2" height="1.6" fill="#ea22ea"/><rect x="540.3" y="133.2" width="2.2" height="1.6" fill="#ea22ea"/>
<path d="M534.75,132 L539.75,132 L537.25,136.5 Z" fill="#ea22ea"/>
<text x="544.6" y="137.3">排气(°C)</text>
<rect x="591.5999999999999" y="133.2" width="2.2" height="1.6" fill="#f0690f"/><rect x="599.8999999999999" y="133.2" width="2.2" height="1.6" fill="#f0690f"/>
<circle cx="596.8499999999999" cy="134" r="2.1" fill="#f0690f"/>
<text x="604.1999999999999" y="137.3">环境(°C)</text>
<rect x="650.5" y="133.2" width="2.2" height="1.6" fill="#1a5cf2"/><rect x="658.8" y="133.2" width="2.2" height="1.6" fill="#1a5cf2"/>
<circle cx="655.75" cy="134" r="2.1" fill="#1a5cf2"/>
<text x="663.1" y="137.3">出风(°C)</text>
<rect x="709.0" y="133.2" width="2.2" height="1.6" fill="#7a1ee6"/><rect x="717.3" y="133.2" width="2.2" height="1.6" fill="#7a1ee6"/>
<rect x="712.05" y="131.8" width="4.4" height="4.4" fill="#7a1ee6"/>
<text x="721.6" y="137.3">水温(°C)</text>
<rect x="768.5" y="133.2" width="2.2" height="1.6" fill="#33a11f"/><rect x="776.8" y="133.2" width="2.2" height="1.6" fill="#33a11f"/>
<path d="M771.25,136 L776.25,136 L773.75,131.5 Z" fill="#33a11f"/>
<text x="781.1" y="137.3">转速(rpm)</text>
<rect x="835.9" y="133.2" width="2.2" height="1.6" fill="#b3a800"/><rect x="844.1999999999999" y="133.2" width="2.2" height="1.6" fill="#b3a800"/>
<path d="M838.65,132 L843.65,132 L841.15,136.5 Z" fill="#b3a800"/>
<text x="848.5" y="137.3">电流A(A)</text>
<rect x="898.8" y="133.2" width="2.2" height="1.6" fill="#e52a2a"/><rect x="907.0999999999999" y="133.2" width="2.2" height="1.6" fill="#e52a2a"/>
<circle cx="904.05" cy="134" r="2.1" fill="#e52a2a"/>
<text x="911.4" y="137.3">电流B(A)</text>
<rect x="960.8" y="133.2" width="2.2" height="1.6" fill="#e8792a"/><rect x="969.0999999999999" y="133.2" width="2.2" height="1.6" fill="#e8792a"/>
<circle cx="966.05" cy="134" r="2.1" fill="#e8792a"/>
<text x="973.4" y="137.3">电流C(A)</text>
<rect x="1022.8" y="133.2" width="2.2" height="1.6" fill="#3b6cf0"/><rect x="1031.1" y="133.2" width="2.2" height="1.6" fill="#3b6cf0"/>
<rect x="1025.85" y="131.8" width="4.4" height="4.4" fill="#3b6cf0"/>
<text x="1035.3999999999999" y="137.3">高压( V)</text>
<rect x="1080.8" y="133.2" width="2.2" height="1.6" fill="#1fb3e6"/><rect x="1089.1" y="133.2" width="2.2" height="1.6" fill="#1fb3e6"/>
<path d="M1083.55,136 L1088.55,136 L1086.05,131.5 Z" fill="#1fb3e6"/>
<text x="1093.3999999999999" y="137.3">低压( V)</text></g>
<text x="0" y="0" font-size="7.2" fill="#555" transform="translate(159.3,382) rotate(-90)" text-anchor="middle">温度(°C)/电压(V)</text>
<text x="0" y="0" font-size="7" fill="#555" transform="translate(1116.5,382) rotate(90)" text-anchor="middle">排气温度/冷却机水温(°C)</text>
</svg>
<div class="tip"><div class="tt">19/05/17 12:33:58</div><div class="tr"><i style="background:#20b2e6"></i>设定(°C): <b>-1</b></div><div class="tr"><i style="background:#1fa83c"></i>厢体(°C): <b>9.1</b></div><div class="tr"><i style="background:#f5a700"></i>除霜(°C): <b>8.7</b></div><div class="tr"><i style="background:#d0103a"></i>电压( V): <b>13.7</b></div><div class="tr"><i style="background:#ea22ea"></i>排气(°C): <b>112</b></div><div class="tr"><i style="background:#f0690f"></i>环境(°C): <b>42.5</b></div><div class="tr"><i style="background:#1a5cf2"></i>出风(°C): <b>5.7</b></div><div class="tr"><i style="background:#7a1ee6"></i>水温(°C): <b>85</b></div><div class="tr"><i style="background:#33a11f"></i>转速(rpm): <b>2 162</b></div><div class="tr"><i style="background:#b3a800"></i>电流A(A): <b>0</b></div><div class="tr"><i style="background:#e52a2a"></i>电流B(A): <b>0</b></div><div class="tr"><i style="background:#e8792a"></i>电流C(A): <b>0</b></div></div>
</body></html>
